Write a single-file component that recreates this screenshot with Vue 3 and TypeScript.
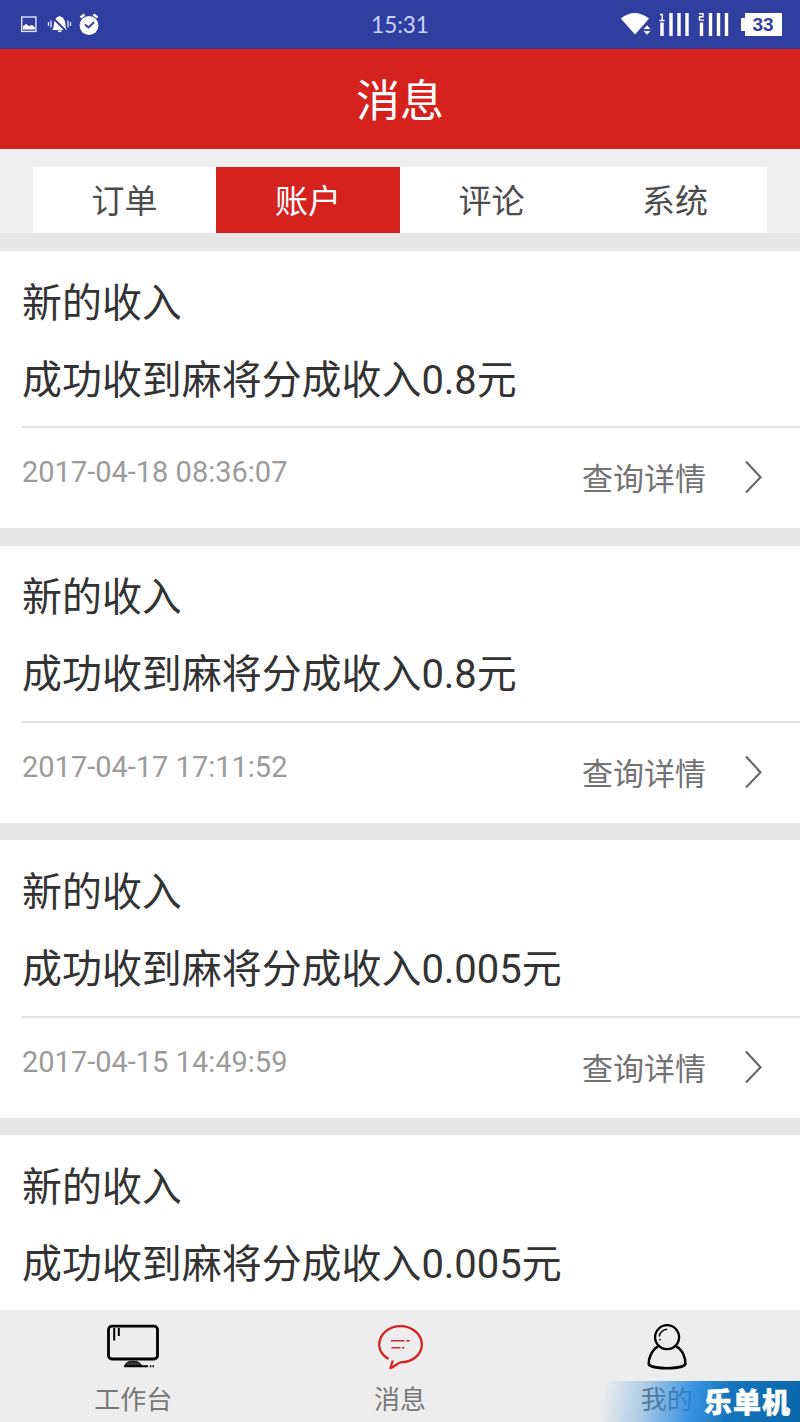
<script setup lang="ts">
interface Message {
  title: string
  body: string
  time: string
}

const tabs: string[] = ['订单', '账户', '评论', '系统']
const activeTab = '账户'

const messages: Message[] = [
  { title: '新的收入', body: '成功收到麻将分成收入0.8元', time: '2017-04-18 08:36:07' },
  { title: '新的收入', body: '成功收到麻将分成收入0.8元', time: '2017-04-17 17:11:52' },
  { title: '新的收入', body: '成功收到麻将分成收入0.005元', time: '2017-04-15 14:49:59' },
  { title: '新的收入', body: '成功收到麻将分成收入0.005元', time: '' },
]
</script>

<template>
  <div class="screen">
    <header class="status">
      <svg class="status-left" width="110" height="48" viewBox="0 0 110 48">
        <rect x="21.7" y="17" width="14.2" height="14.4" fill="none" stroke="#dfe4ff" stroke-width="1.4" />
        <path d="M23 29.5v-3.2l3-2.3 3 2 3-1 2.8 2.2v2.3z" fill="#fff" />
        <path d="M52 30c2.2-1.5 1.5-4.5 2.2-8 .6-3 2-4.8 4.3-5.3.3-1.4 1.7-1.4 2 0 2.5.5 4 2.3 4.6 5.3.7 3.5 0 6.5 2.2 8zM57.5 30.500h4.500c-.4 2.300-4.100 2.300-4.500 0z" fill="#fff" />
        <path d="M52.500 17.500 66.500 31.500" stroke="#303f9f" stroke-width="2" />
        <path d="M51 20.500v7M48.500 22v4M68 20.500v7M70.500 22v4" stroke="#dfe4ff" stroke-width="1.3" />
        <circle cx="89" cy="25.5" r="9.4" fill="#fff" />
        <path d="M80.500 17.500 84.500 14.500M93.500 14.500 97.500 17.500" stroke="#fff" stroke-width="2.4" />
        <path d="m85 24.500 3.500 3 5.500-5.200" fill="none" stroke="#303f9f" stroke-width="2" />
      </svg>
      <span class="clock">15:31</span>
      <div class="status-right">
        <svg width="120" height="48" viewBox="614 0 120 48">
          <path d="M620.8 18.5Q634.5 7.5 649 18.5L643.5 25 635 34.5Z" fill="#fff" />
          <path d="M642.8 29.5 647 24.8 651.2 29.5ZM642.8 30.7 647 35.2 651.2 30.7Z" fill="#fff" stroke="#303f9f" stroke-width=".8" />
          <path d="M662 22.5V36M671 13V36M679 13V36M687 13V36M701.5 22.5V36M710.5 13V36M718.5 13V36M726.5 13V36" stroke="#fff" stroke-width="3.4" />
          <path d="M660 14.5h2.2V20M659.5 20.500h5M699 13.800h4v3h-3.500v3.300h4.500" fill="none" stroke="#fff" stroke-width="1.4" />
        </svg>
        <span class="battery">33</span>
      </div>
    </header>
    <h1 class="title">消息</h1>
    <nav class="tabs">
      <button v-for="tab in tabs" :key="tab" class="tab" :class="{ active: tab === activeTab }">{{ tab }}</button>
    </nav>

    <main class="list">
      <article v-for="(m, i) in messages" :key="i" class="card">
        <div class="content">
          <h2>{{ m.title }}</h2>
          <p>{{ m.body }}</p>
        </div>
        <div class="foot">
          <time>{{ m.time }}</time>
          <span class="detail">查询详情</span>
          <svg class="arrow" width="20" height="36" viewBox="0 0 20 36">
            <path d="M2 2.500 16.500 18.300 2 33.500" fill="none" stroke="#666" stroke-width="2.1" />
          </svg>
        </div>
      </article>
    </main>

    <footer class="bottom">
      <div class="item">
        <svg width="60" height="50" viewBox="103 1320 60 50">
          <rect x="108.5" y="1326.2" width="49" height="32.8" rx="3.5" fill="none" stroke="#000" stroke-width="2.8" />
          <path d="M114.2 1328V1340.5M118.8 1328V1336" stroke="#000" stroke-width="2" />
          <path d="M124.5 1366.3C126 1362 129 1361.3 133 1361.3S140 1362 142 1366.3Z" fill="#333" stroke="#000" stroke-width="1" />
          <path d="M124.5 1366.2H148M149.8 1366.2H151.3M152.5 1366.2H154" stroke="#000" stroke-width="2" />
        </svg>
        <span>工作台</span>
      </div>
      <div class="item">
        <svg width="60" height="50" viewBox="370 1320 60 50">
          <path d="M388.5 1359C382.5 1355.5 379.2 1350.5 379.2 1344.8C379.2 1334.5 388.5 1326.2 400.5 1326.2S421.8 1334.5 421.8 1344.5C421.8 1355.5 411.5 1362.3 400.5 1362.3C396.5 1364 394 1367 390.5 1368L392.8 1360.5" fill="none" stroke="#d3221f" stroke-width="2.3" stroke-linejoin="round" />
          <path d="M391 1340.7H404.5M406.3 1340.7H409.8M391.5 1347.7H400.5M402 1347.7H404.3" stroke="#c52d2c" stroke-width="1.5" />
        </svg>
        <span>消息</span>
      </div>
      <div class="item">
        <svg width="60" height="50" viewBox="637 1320 60 50">
          <path d="M658 1346.7C652 1349.5 648.3 1358.5 648.7 1364C650.5 1369.5 683.5 1369.5 685.4 1364C685.8 1358.5 682.5 1349.5 676.3 1346.7" fill="none" stroke="#000" stroke-width="2.5" />
          <circle cx="667.1" cy="1337.2" r="12" fill="none" stroke="#000" stroke-width="2.3" />
          <path d="M659.3 1336.5C659.5 1332.5 663 1329.5 667.2 1329.3" fill="none" stroke="#000" stroke-width="1.4" />
          <circle cx="660" cy="1339.6" r=".9" />
        </svg>
        <span>我的</span>
      </div>
      <div class="badge"><b>乐单机</b></div>
    </footer>
  </div>
</template>

<style scoped>
.screen {
  width: 800px;
  height: 1422px;
  display: flex;
  flex-direction: column;
  overflow: hidden;
  background: #e7e7e7;
  font-family: Roboto, 'Noto Sans CJK SC', sans-serif;
  color: #333;
}
h1, h2, p { margin: 0; font-weight: 400; }
svg { display: block; flex: none; }
.status {
  flex: none;
  height: 49px;
  display: grid;
  grid-template-columns: 1fr auto 1fr;
  background: #303f9f;
}
.clock {
  font: 22.5px/50px Lato, sans-serif;
  color: #cbd2ff;
}
.status-right {
  display: flex;
  justify-content: flex-end;
  padding-right: 18px;
}
.battery {
  box-sizing: border-box;
  width: 41px;
  height: 23px;
  margin: 13px 0 0 7px;
  padding-left: 3px;
  background: #fff;
  clip-path: polygon(4px 0, 100% 0, 100% 100%, 4px 100%, 4px 18px, 0 18px, 0 5px, 4px 5px);
  color: #303f9f;
  font: bold 19px/23px 'Liberation Sans', sans-serif;
  text-align: center;
}
.title {
  flex: none;
  height: 100px;
  background: #d6221f;
  color: #fff;
  font-size: 44px;
  line-height: 106px;
  text-align: center;
}
.tabs {
  flex: none;
  display: flex;
  height: 66.5px;
  padding: 17.5px 33.2px 0 32.7px;
  background: #efefef;
}
.tab {
  flex: 1;
  border: 0;
  padding: 0;
  background: #fff;
  color: #4c4c4c;
  font: inherit;
  font-size: 33px;
  line-height: 70px;
}
.tab.active {
  background: #d6221f;
  color: #fff;
}
.list {
  flex: 1;
  min-height: 0;
  overflow: hidden;
  display: flex;
  flex-direction: column;
  gap: 17.5px;
  padding-top: 18px;
}
.card {
  flex: none;
  height: 277.2px;
  background: #fff;
}
.content {
  box-sizing: border-box;
  height: 177.2px;
  margin-left: 22px;
  padding-top: 13.6px;
  border-bottom: 2px solid #e3e3e3;
  font-size: 39.95px;
  line-height: 77px;
}
h2 { font-size: inherit; }
.foot {
  display: flex;
  padding: 0 36px 0 22px;
  height: 99px;
}
time {
  flex: 1;
  font-size: 29px;
  line-height: 88px;
  color: #9b9b9b;
}
.detail {
  font-size: 31px;
  line-height: 104px;
  color: #737373;
}
.arrow { margin: 31px 0 0 38px; }
.bottom {
  position: relative;
  flex: none;
  height: 112px;
  display: flex;
  background: #ededed;
}
.item {
  flex: 1;
  display: flex;
  flex-direction: column;
  align-items: center;
  padding-top: 10px;
  font-size: 26px;
  line-height: 40px;
  color: #777;
}
.item span { margin-top: 10px; }
.badge {
  position: absolute;
  right: 0;
  bottom: 0;
  width: 200px;
  height: 41px;
  background: linear-gradient(100deg, rgba(28, 128, 214, 0) 2%, rgba(28, 128, 214, 0.3) 22%, rgba(28, 132, 224, 0.86) 46%, #1674bd 64%, #0867aa 100%);
}
.badge b {
  display: block;
  margin-left: 104px;
  color: #fff;
  font: 900 28px/41px 'Noto Sans CJK SC', sans-serif;
  letter-spacing: 1px;
  -webkit-text-stroke: 0.5px #fff;
  white-space: nowrap;
}
</style>
